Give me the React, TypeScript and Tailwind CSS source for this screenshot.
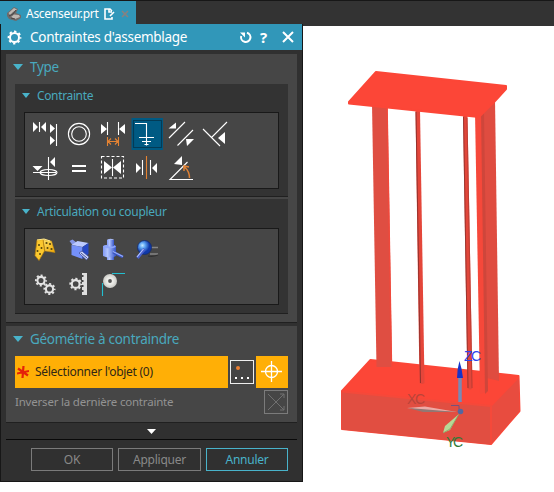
import React from "react";

const ui = "font-['Noto_Sans','Open_Sans',sans-serif]";

function Icon({ x, y, label, children }: { x: number; y: number; label: string; children: React.ReactNode }) {
  return (
    <button aria-label={label} className="block h-[35px] w-[34px]">
      <svg className="block" width="34" height="35" viewBox={`${x} ${y} 34 35`} fill="none" stroke="#fff" strokeWidth="1.1">
        {children}
      </svg>
    </button>
  );
}

function Tri({ d }: { d: string }) {
  return <path d={d} fill="#fff" stroke="none" />;
}

function Gear({ cx, cy, r }: { cx: number; cy: number; r: number }) {
  const tooth = ((r + 1.5) * Math.PI) / 8;
  return (
    <g stroke="#e2e2e2">
      <circle cx={cx} cy={cy} r={r} strokeWidth="2.1" />
      <circle cx={cx} cy={cy} r={r + 1.5} strokeWidth="1.9" strokeDasharray={`${tooth} ${tooth}`} strokeDashoffset={tooth / 2} />
    </g>
  );
}

function Header({ text, small = false, spacing }: { text: string; small?: boolean; spacing: string }) {
  return (
    <div className={small ? "flex h-[23px] items-center pl-[7px]" : "flex h-[25px] items-center pl-[7px]"}>
      <svg width={small ? 8 : 10} height={small ? 5 : 6} viewBox="0 0 10 6" preserveAspectRatio="none">
        <path d="M0 0H10L5 6Z" fill="#49b3ca" />
      </svg>
      <span className={`${spacing} whitespace-nowrap text-[#49a9be] ${small ? "ml-[7px] text-[12px] leading-4" : "ml-[7px] text-[13.5px] leading-5"}`}>{text}</span>
    </div>
  );
}

function ConstraintIcons() {
  return (
    <div className="ml-[9px] mt-[5px] grid h-[77px] w-[255px] grid-cols-[repeat(6,34px)] grid-rows-[35px_35px] border border-[#191919] bg-[#464646] pl-[2px] pt-[3px]">
      <Icon x={27} y={116} label="Toucher aligner">
        <Tri d="M33 122v10l5-5zM46 122v10l-5-5zM50 124v9l5-4.500zM50 136v9l5-4.500z" />
        <path d="M39.500 122v10M56.500 124v22" />
      </Icon>
      <Icon x={61} y={116} label="Concentrique">
        <circle cx="79" cy="134" r="10.600" /><circle cx="79" cy="134" r="7.300" />
      </Icon>
      <Icon x={95} y={116} label="Distance">
        <Tri d="M101 124v10l6-5zM125 124v10l-6-5z" />
        <path d="M107.500 122v13M118.500 122v13" />
        <path d="M107.500 137v9M118.500 137v9M108 141.500h10M111 138.500l-3 3 3 3M115 138.500l3 3-3 3" stroke="#e58332" />
      </Icon>
      <Icon x={129} y={116} label="Fixe">
        <rect x="131.500" y="118" width="31.500" height="32" fill="#005a83" stroke="none" />
        <rect x="133.500" y="120.500" width="28" height="27" stroke="#061d2b" strokeDasharray="1 1" />
        <path d="M135 123.500h11.500v22M139 137.500h15M142 141.500h9M144.500 144.500h4" />
      </Icon>
      <Icon x={163} y={116} label="Parallèle">
        <path d="M169 138l16-16M177.500 145.500L193 130" />
        <Tri d="M168.500 128.500l7.500-6v6zM186 139h8l-7 7z" />
      </Icon>
      <Icon x={197} y={116} label="Perpendiculaire">
        <path d="M203 129l17 17M211.500 137.500L227 122" />
        <Tri d="M218 138l7-6v12z" />
      </Icon>
      <Icon x={27} y={151} label="Aligner verrouiller">
        <Tri d="M32.500 166h10l-5 5zM55 157v10l-5-5z" />
        <path d="M48.500 157v23M33 172.500h23" />
        <ellipse cx="48.500" cy="172.500" rx="8.500" ry="3" />
      </Icon>
      <Icon x={61} y={151} label="Ajustement">
        <path d="M72 166h14M72 171h14" strokeWidth="2" />
      </Icon>
      <Icon x={95} y={151} label="Coller">
        <rect x="101.500" y="156.500" width="22" height="21.500" strokeDasharray="3 2" />
        <Tri d="M104 161v13l8-6.500zM121 161v13l-8-6.500z" />
        <path d="M112.500 159v17" />
      </Icon>
      <Icon x={129} y={151} label="Centrer">
        <Tri d="M136 163v10l5-5zM157 163v10l-5-5z" />
        <path d="M142.500 160v15M150.500 160v15" /><path d="M146.500 156v23" stroke="#e58332" />
      </Icon>
      <Icon x={163} y={151} label="Angle">
        <path d="M193 179.500H170L187.500 162" /><Tri d="M174 164l8-8v9z" />
        <path d="M189.500 178c0-5-1.500-8-5-11M184 171v-5l5 1" stroke="#df8134" strokeWidth="1.500" />
      </Icon>
    </div>
  );
}

function JointIcons() {
  return (
    <div className="ml-[9px] mt-[5px] grid h-[77px] w-[255px] grid-cols-[repeat(6,34px)] grid-rows-[35px_35px] border border-[#191919] bg-[#464646] pl-[2px] pt-[3px]">
      <Icon x={27} y={232} label="Charnière">
        <defs><linearGradient id="gold" x1="0" y1="0" x2="1" y2="1"><stop stopColor="#ffe36b" /><stop offset="1" stopColor="#eda500" /></linearGradient></defs>
        <path d="M43 239.500L51.500 241L55 252.500L45 251Z" fill="url(#gold)" stroke="#c28a13" strokeWidth=".5" />
        <path d="M37 240L43 239.500L44.500 251L39 260.500L35 255.500Z" fill="#fbc82e" stroke="#b77e0a" strokeWidth=".7" />
        <path d="M37 240L44 239L50 241" stroke="#ffe88a" />
        <g fill="#55450d" stroke="none"><circle cx="46.500" cy="243" r="1.100" /><circle cx="50" cy="244" r="1.100" /><circle cx="51.500" cy="249" r="1.100" /><circle cx="47.500" cy="248" r="1" /><circle cx="39" cy="245" r="1" /><circle cx="41.500" cy="248" r="1" /><circle cx="37.500" cy="251" r="1" /><circle cx="40" cy="254" r="1" /></g>
      </Icon>
      <Icon x={61} y={232} label="Curseur">
        <path d="M69.500 241l3-1.500 4 3-4 2.500z" fill="#8798e8" stroke="none" />
        <path d="M71.500 245l6-4 11 2-6 4z" fill="#bccaff" stroke="none" />
        <path d="M71.500 245l11 2v12l-11-4z" fill="#7591fa" stroke="none" />
        <path d="M82.500 247l6-4v11l-6 5z" fill="#2748c4" stroke="none" />
        <path d="M79 253l3-2 7 6-2.500 3z" fill="#d1d9ff" stroke="#344392" strokeWidth=".7" />
        <path d="M81 253l6 5" stroke="#263578" strokeWidth=".8" />
      </Icon>
      <Icon x={95} y={232} label="Cylindrique">
        <defs><linearGradient id="blue"><stop stopColor="#8098f5" /><stop offset=".35" stopColor="#b2c5ff" /><stop offset="1" stopColor="#3554c9" /></linearGradient></defs>
        <path d="M107 240h7v20h-7z" fill="url(#blue)" stroke="none" />
        <ellipse cx="110.500" cy="240.500" rx="3.500" ry="1.700" fill="#a5b8f5" stroke="none" />
        <path d="M103 246q7-3 13 0v10q-6 3-13 0z" fill="url(#blue)" stroke="none" />
        <ellipse cx="109.500" cy="246.500" rx="6.300" ry="1.800" fill="#8fa7fc" stroke="none" />
        <path d="M107 240h7v6q-3 1-7 0z" fill="url(#blue)" stroke="none" />
        <path d="M113 252l10 5" stroke="#3b55bf" strokeWidth="2.800" /><path d="M113 251.500l10 5" stroke="#9bb1fb" />
      </Icon>
      <Icon x={129} y={232} label="Boule">
        <defs><radialGradient id="ball" cx=".35" cy=".35"><stop stopColor="#c6eaff" /><stop offset=".4" stopColor="#5fa6f4" /><stop offset="1" stopColor="#1038a8" /></radialGradient></defs>
        <path d="M151 247.500h7M150 254h8" stroke="#858585" strokeWidth="1.500" />
        <path d="M148 256q5 1 10-1" stroke="#303030" />
        <circle cx="144.500" cy="247.500" r="7" fill="url(#ball)" stroke="#132b6b" strokeWidth=".8" />
        <path d="M144.500 249l-7 9" stroke="#465ecb" strokeWidth="3" /><path d="M143.500 249l-6.500 8" stroke="#b4c4ff" />
      </Icon>
      <span /><span />
      <Icon x={27} y={267} label="Engrenage"><Gear cx={41} cy={280.500} r={3.600} /><Gear cx={49.500} cy={289} r={3.600} /></Icon>
      <Icon x={61} y={267} label="Crémaillère">
        <Gear cx={75.700} cy={284} r={3.900} />
        <path d="M82 273h5v22h-5v-3h1.500v-2H82v-3h1.500v-2H82v-3h1.500v-2H82v-3h1.500v-2H82z" fill="#dedede" stroke="none" />
      </Icon>
      <Icon x={95} y={267} label="Câble">
        <defs><radialGradient id="disc"><stop offset=".45" stopColor="#edede9" /><stop offset="1" stopColor="#c9c9c5" /></radialGradient></defs>
        <path d="M102.500 296v-13M112 273.500h13" stroke="#22bfd0" />
        <circle cx="110" cy="281" r="7" fill="url(#disc)" stroke="none" /><circle cx="110" cy="281" r="1.900" fill="#555" stroke="none" />
      </Icon>
    </div>
  );
}

function Model() {
  return (
    <svg className="block" width="251" height="466" viewBox="303 26 251 466" strokeLinejoin="round">
      <path d="M342 391L370.500 360L518.500 376L519.500 411L491 444L342 429Z" fill="#fc4637" stroke="#fc4637" strokeWidth="2" />
      <path d="M341.500 391.500L491 406L490.500 444.500L341.500 429.500Z" fill="#e14e41" />
      <path d="M341.500 391.500L491 406V444" stroke="#f5493a" strokeWidth="2" fill="none" />
      <path d="M492 406L519 378L519.500 411L492 443Z" fill="#e84c3f" />
      <path d="M481 106L495 99L499 381L487 378Z" fill="#df4c40" />
      <path d="M372 104L387.500 104L392 367L376.500 367Z" fill="#df4e42" />
      <path d="M387 104L391.500 367" stroke="#f0493c" strokeWidth="1.500" />
      <path d="M475 112L482 112L487.500 392L480 394Z" fill="#f6483a" />
      <path d="M481 112L484 112L488 391L485 394Z" fill="#ce463b" />
      <path d="M415.500 110L420 110L424.500 383Q422 385 419.500 383Z" fill="#e4463a" />
      <path d="M416 112L420.500 383" stroke="#8a302b" strokeWidth=".9" />
      <path d="M463 115L467.500 115L472.500 388Q470 391 467.500 388Z" fill="#e1463a" />
      <path d="M463.500 117L468 388" stroke="#88312c" strokeWidth=".8" />
      <path d="M467 118L472 388" stroke="#b33b32" strokeWidth=".8" />
      <path d="M349 102L376 72L506 86L506 89L495 101L479 117L349 103.500Z" fill="#fc4637" stroke="#fc4637" strokeWidth="2" />
      <g fontFamily="Liberation Sans, sans-serif" fontSize="14">
        <text x="407" y="404" fill="#b94439" textLength="18">XC</text>
        <text x="464" y="360.500" fill="#3044ee" textLength="17">ZC</text>
        <text x="446" y="446.500" fill="#327938" textLength="17">YC</text>
      </g>
      <path d="M460 402V376" stroke="#788ab6" strokeWidth="3.500" />
      <path d="M457 378Q457 369 459.500 361Q462 369 463 378Z" fill="#1633c9" />
      <path d="M407 408L425 406.500L457 412L430 411Z" fill="#edaaa5" />
      <path d="M408 408L421 409L457 412L423 412Z" fill="#927773" />
      <path d="M459 414L450 430L443 433L445 426Z" fill="#b7d896" />
      <path d="M459 414L450 429L443 433" stroke="#7ea062" strokeWidth=".7" fill="none" />
      <path d="M451 405.500h8v4" stroke="#75517d" fill="none" />
      <circle cx="460.500" cy="411.500" r="2.800" fill="#5267a1" />
    </svg>
  );
}

export default function App() {
  return (
    <div className={`${ui} h-[492px] w-[554px] overflow-hidden bg-white`}>
      <div className="flex h-[26px] border-t border-[#171717] bg-[#333]">
        <div className="flex h-[25px] w-[136px] items-center bg-[#3197b9] pl-[7px] text-white">
          <svg width="15" height="14" viewBox="0 0 15 14">
            <path d="M0 6L7 0L11 2L9 6L14 8V11L9 14L2 12L0 9Z" fill="#6f6a69" />
            <path d="M1.500 6L7 1L10 2.500L6 5L3 8ZM7 7.500L12 8L13 10L8 12L4 10Z" fill="#bdb7b2" /><path d="M2 9L6 7L9 3M4 11L8 12" stroke="#494747" fill="none" />
          </svg>
          <span className="ml-[4px] w-[73px] whitespace-nowrap text-[12px] leading-4 tracking-[-0.28px]">Ascenseur.prt</span>
          <svg className="ml-[5px]" width="11" height="12" viewBox="0 0 11 12" fill="none" stroke="#fff" strokeWidth="1.600"><path d="M8 3L6 1H1v10h7V9M5 1v3h3M6 8l4-4" /></svg>
          <svg className="ml-[6px]" width="8" height="8" viewBox="0 0 8 8" fill="none" stroke="#8a817f" strokeWidth="1.600"><path d="M1 1l6 6M7 1L1 7" /></svg>
        </div>
      </div>
      <div className="flex">
        <section className="-mt-[2px] h-[458px] w-[303px] shrink-0 border-x border-b border-[#171717] bg-[#303030]">
          <header className="relative flex h-[26px] items-center bg-[#3197b9] pl-[6px] text-white">
            <svg width="15" height="15" viewBox="0 0 15 15" fill="none" stroke="#fff">
              <circle cx="7.500" cy="7.500" r="4.500" strokeWidth="2" /><circle cx="7.500" cy="7.500" r="6" strokeWidth="1.800" strokeDasharray="2.350 2.362" strokeDashoffset="1.175" />
            </svg>
            <h1 className="ml-[8px] w-[209px] whitespace-nowrap text-[13.5px] leading-5 tracking-[-0.28px]">Contraintes d'assemblage</h1>
            <svg width="13" height="13" viewBox="0 0 13 13" fill="none" stroke="#fff" strokeWidth="2"><path d="M8 1.700A4.700 4.700 0 1 1 2.200 5" /><path d="M1 1.500h5v5z" fill="#fff" stroke="none" /></svg>
            <span className="ml-[8px] w-[9px] text-[15px] font-bold leading-5">?</span>
            <svg className="ml-[13px]" width="12" height="12" viewBox="0 0 12 12" stroke="#fff" strokeWidth="2"><path d="M1 1l10 10M11 1L1 11" /></svg>
          </header>
          <div className="ml-[5px] mt-[4px] h-[269px] w-[291px] border-b border-[#202020] bg-[#464646]">
            <Header text="Type" spacing="tracking-[-0.3px]" />
            <div className="ml-[9px] mt-[5px] h-[113px] w-[273px] border-b border-[#202020] bg-[#333]"><Header small text="Contrainte" spacing="tracking-[-0.36px]" /><ConstraintIcons /></div>
            <div className="ml-[9px] mt-[2px] h-[115px] w-[273px] border-b border-[#202020] bg-[#333] pt-px"><Header small text="Articulation ou coupleur" spacing="tracking-[-0.27px]" /><JointIcons /></div>
          </div>
          <div className="ml-[5px] mt-[3px] h-[97px] w-[291px] border-b border-[#202020] bg-[#464646]">
            <Header text="Géométrie à contraindre" spacing="tracking-[-0.29px]" />
            <div className="ml-[9px] mt-[5px] flex h-[32px] items-center">
              <div className="flex h-[32px] w-[213px] items-center bg-[#ffaf06] pl-[2px]">
                <svg width="12" height="12" viewBox="0 0 12 12" stroke="#e52109" strokeWidth="2.200"><path d="M6.500 0L5.500 12M1 2.500l10 7M0 7.500L12 5" /></svg>
                <span className="ml-[6px] whitespace-nowrap text-[12px] leading-4 tracking-[-0.28px] text-[#302716]">Sélectionner l'objet (0)</span>
              </div>
              <button aria-label="Constructeur de points" className="ml-[2px] h-[24px] w-[24px] border border-[#eee] bg-[#444]">
                <svg width="22" height="22" viewBox="0 0 22 22"><circle cx="7" cy="7" r="2" fill="#ee8031" /><path d="M4 16h2v2H4zM10 16h2v2h-2zM16 16h2v2h-2z" fill="#fff" /></svg>
              </button>
              <button aria-label="Sélectionner" className="ml-[2px] h-[32px] w-[32px] bg-[#ffaf06]">
                <svg width="32" height="32" viewBox="0 0 32 32" fill="none" stroke="#fff" strokeWidth="1.300"><circle cx="15.500" cy="15.500" r="6" /><path d="M5 15.500h21M15.500 5v21" /></svg>
              </button>
            </div>
            <div className="ml-[9px] mt-[2px] flex h-[24px] w-[273px] items-center justify-between">
              <span className="text-[11.5px] leading-4 tracking-[-0.2px] text-[#939393]">Inverser la dernière contrainte</span>
              <button disabled aria-label="Inverser" className="h-[24px] w-[24px] border border-[#7b7b7b]"><svg width="22" height="22" viewBox="0 0 22 22" fill="none" stroke="#707070"><path d="M3 19L19 3M3 3l16 16M15 3h4v4M15 19h4v-4" /></svg></button>
            </div>
          </div>
          <div className="ml-[5px] flex h-[17px] w-[291px] items-center justify-center border-b border-[#090909]"><svg width="9" height="5" viewBox="0 0 9 5"><path d="M0 0h9L4.500 5z" fill="#fff" /></svg></div>
          <div className="ml-[30px] mt-[8px] flex gap-[4px] text-[12px] leading-[21px] tracking-[-0.25px]">
            <button disabled className="h-[23px] w-[82px] border border-[#7b7b7b] text-[#898989]">OK</button>
            <button disabled className="ml-px h-[23px] w-[83px] border border-[#7b7b7b] text-[#898989]">Appliquer</button>
            <button className="ml-px h-[23px] w-[82px] border border-[#49b3ca] text-[#49b3ca]">Annuler</button>
          </div>
        </section>
        <Model />
      </div>
    </div>
  );
}
